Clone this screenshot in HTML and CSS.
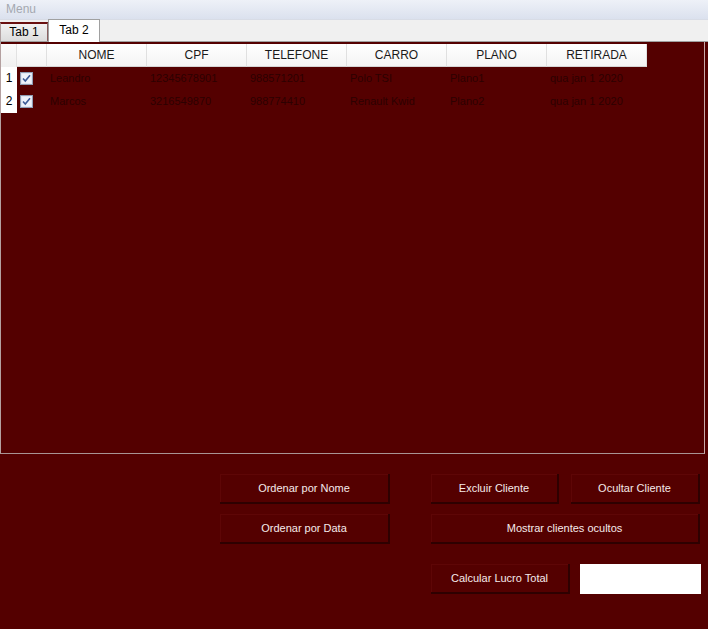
FILE: index.html
```html
<!DOCTYPE html>
<html>
<head>
<meta charset="utf-8">
<link rel="stylesheet" href="styles.css">
</head>
<body>
<div class="menubar"><span class="menu">Menu</span></div>
<div class="tabstrip">
  <div class="tab tab1">Tab 1</div>
  <div class="tab tab2">Tab 2</div>
</div>
<div class="panel">
  <div class="scrollpane">
    <div class="table">
      <div class="hdr">
        <div class="rh corner"></div>
        <div class="hc chk"></div>
        <div class="hc">NOME</div>
        <div class="hc">CPF</div>
        <div class="hc">TELEFONE</div>
        <div class="hc">CARRO</div>
        <div class="hc">PLANO</div>
        <div class="hc">RETIRADA</div>
      </div>
      <div class="row">
        <div class="rh">1</div>
        <div class="cell chk"><svg width="13" height="13" viewBox="0 0 13 13"><rect x="0.5" y="0.5" width="12" height="12" fill="#dfe6f2" stroke="#8f9cb3"/><rect x="2" y="2" width="9" height="9" fill="#eef2fa"/><path d="M3 6.5 L5.3 9 L10 3.2" fill="none" stroke="#3c5a96" stroke-width="1.6"/></svg></div>
        <div class="cell">Leandro</div>
        <div class="cell">12345678901</div>
        <div class="cell">988571201</div>
        <div class="cell">Polo TSI</div>
        <div class="cell">Plano1</div>
        <div class="cell">qua jan 1 2020</div>
      </div>
      <div class="row">
        <div class="rh">2</div>
        <div class="cell chk"><svg width="13" height="13" viewBox="0 0 13 13"><rect x="0.5" y="0.5" width="12" height="12" fill="#dfe6f2" stroke="#8f9cb3"/><rect x="2" y="2" width="9" height="9" fill="#eef2fa"/><path d="M3 6.5 L5.3 9 L10 3.2" fill="none" stroke="#3c5a96" stroke-width="1.6"/></svg></div>
        <div class="cell">Marcos</div>
        <div class="cell">3216549870</div>
        <div class="cell">988774410</div>
        <div class="cell">Renault Kwid</div>
        <div class="cell">Plano2</div>
        <div class="cell">qua jan 1 2020</div>
      </div>
    </div>
  </div>
  <div class="controls">
    <div class="btnrow">
      <button class="btn w170">Ordenar por Nome</button>
      <button class="btn w128 ml41">Excluir Cliente</button>
      <button class="btn w129 ml12">Ocultar Cliente</button>
    </div>
    <div class="btnrow">
      <button class="btn w170">Ordenar por Data</button>
      <button class="btn w269 ml41">Mostrar clientes ocultos</button>
    </div>
    <div class="btnrow last">
      <button class="btn w139 ml211">Calcular Lucro Total</button>
      <div class="result"></div>
    </div>
  </div>
</div>
</body>
</html>
```
FILE: styles.css
```css
* { box-sizing: border-box; }
html, body { margin: 0; padding: 0; }
body {
  width: 708px;
  height: 629px;
  overflow: hidden;
  font-family: "Liberation Sans", Arial, sans-serif;
  font-size: 12px;
  background: #540000;
}
.menubar {
  height: 20px;
  background: linear-gradient(#eef1f8, #dbe1ee);
  border-bottom: 1px solid #d8dce6;
  padding-left: 6px;
  line-height: 19px;
}
.menu { color: #a4a8b0; font-size: 12px; }
.tabstrip {
  height: 22px;
  background: #f0f0f0;
  display: flex;
  align-items: flex-end;
  border-bottom: 1px solid #a0a0a0;
}
.tab {
  font-size: 12px;
  color: #000;
  text-align: center;
}
.tab1 {
  width: 48px;
  height: 19px;
  line-height: 17px;
  background: linear-gradient(#f2f2f2, #dcdcdc);
  border-top: 2px solid #6a1010;
  border-right: 1px solid #8a6060;
  border-left: 1px solid #b0a0a0;
}
.tab2 {
  width: 52px;
  height: 23px;
  line-height: 21px;
  background: #fff;
  border: 1px solid #a0a0a0;
  border-bottom: none;
  margin-bottom: -1px;
}
.panel {
  background: #540000;
  height: 587px;
  display: flex;
  flex-direction: column;
}
.scrollpane {
  height: 412px;
  margin-right: 3px;
  border-left: 1px solid #b4a0a0;
  border-right: 1px solid #c8a8a8;
  border-bottom: 1px solid #a89494;
}
.table { padding-top: 2px; }
.hdr, .row { display: flex; }
.hdr { height: 23px; }
.rh {
  width: 16px;
  background: #fff;
  color: #000;
  font-size: 12px;
  text-align: center;
  line-height: 23px;
}
.corner { background: linear-gradient(#fcfcfc, #f0f0f0); border-right: 1px solid #e2e2e2; }
.hc {
  width: 100px;
  background: linear-gradient(#ffffff, #f4f4f4);
  border-right: 1px solid #e0e0e0;
  border-bottom: 1px solid #d4d4d4;
  text-align: center;
  line-height: 22px;
  color: #1a1a1a;
}
.hc.chk { width: 30px; }
.row { height: 23px; }
.cell {
  width: 100px;
  line-height: 23px;
  padding-left: 3px;
  color: #2c0000;
  font-size: 11px;
  white-space: nowrap;
  overflow: hidden;
}
.cell.chk { width: 30px; padding-left: 3px; display: flex; align-items: center; }
.controls {
  padding-top: 20px;
  padding-left: 220px;
}
.btnrow { display: flex; height: 30px; margin-bottom: 10px; }
.btnrow.last { margin-top: 20px; }
.btn {
  height: 30px;
  background: #540000;
  color: #f4eaea;
  font-family: "Liberation Sans", Arial, sans-serif;
  font-size: 11px;
  border: none;
  border-right: 2px solid #2e0000;
  border-bottom: 2px solid #2e0000;
  box-shadow: inset 1px 1px 0 #5e0606;
  padding: 0;
}
.w170 { width: 170px; }
.w128 { width: 128px; }
.w129 { width: 129px; }
.w269 { width: 269px; }
.w139 { width: 139px; }
.ml41 { margin-left: 41px; }
.ml12 { margin-left: 12px; }
.ml211 { margin-left: 211px; }
.result {
  width: 121px;
  height: 30px;
  margin-left: 10px;
  background: #fff;
}
```
